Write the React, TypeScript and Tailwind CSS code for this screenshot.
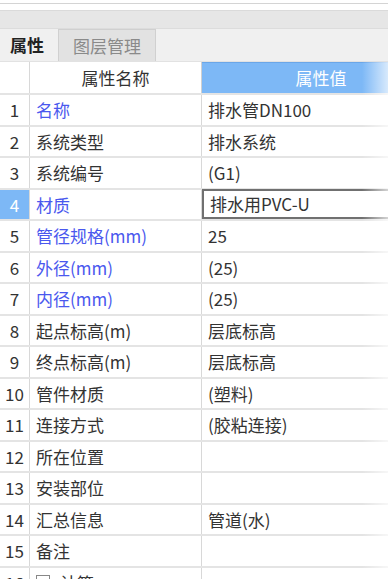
import React from "react";

const rows: { n: number; name: string; value: string; blue?: boolean }[] = [
  { n: 1, name: "名称", value: "排水管DN100", blue: true },
  { n: 2, name: "系统类型", value: "排水系统" },
  { n: 3, name: "系统编号", value: "(G1)" },
  { n: 4, name: "材质", value: "排水用PVC-U", blue: true },
  { n: 5, name: "管径规格(mm)", value: "25", blue: true },
  { n: 6, name: "外径(mm)", value: "(25)", blue: true },
  { n: 7, name: "内径(mm)", value: "(25)", blue: true },
  { n: 8, name: "起点标高(m)", value: "层底标高" },
  { n: 9, name: "终点标高(m)", value: "层底标高" },
  { n: 10, name: "管件材质", value: "(塑料)" },
  { n: 11, name: "连接方式", value: "(胶粘连接)" },
  { n: 12, name: "所在位置", value: "" },
  { n: 13, name: "安装部位", value: "" },
  { n: 14, name: "汇总信息", value: "管道(水)" },
  { n: 15, name: "备注", value: "" },
];

export default function App() {
  const font = { fontFamily: '"Noto Sans CJK SC", "Noto Sans", sans-serif' };
  return (
    <div className="w-[388px] h-[579px] overflow-hidden bg-white relative text-[#333]" style={font}>
      {/* top chrome */}
      <div className="h-[3px] bg-white" />
      <div className="h-[1px] bg-[#d4d4d4]" />
      <div className="h-[6px] bg-white" />
      <div className="h-[18px] bg-[#e6e6e6] border-t border-[#dadada]" />
      {/* tabs */}
      <div className="h-[34px] bg-[#f0f0f0] border-t border-[#dcdcdc] flex items-stretch border-b border-b-[#e2e2e2]">
        <div className="w-[58px] flex items-center pl-[10px] text-[17px] font-bold text-[#222]">属性</div>
        <div className="w-[98px] flex items-center justify-center bg-[#e2e2e2] border-x border-t border-[#d0d0d0] text-[17px] text-[#8a8a8a]">
          图层管理
        </div>
      </div>
      {/* table */}
      <div className="w-[440px]">
        <div className="grid grid-cols-[30px_172px_238px] h-[31px] text-[17px]">
          <div className="border-r border-[#d8d8d8] bg-white" />
          <div className="border-r border-[#d0d0d0] bg-white flex items-center justify-center">属性名称</div>
          <div className="bg-[#7db8f6] flex items-center justify-center text-white border-t border-[#6aa6e8]">属性值</div>
        </div>
        {rows.map((r) => (
          <div
            key={r.n}
            className="grid grid-cols-[30px_172px_238px] h-[31.5px] text-[17px] border-t-2 border-[#e4e4e4]"
          >
            <div
              className={
                "flex items-center justify-center border-r border-[#d8d8d8] " +
                (r.n === 4 ? "bg-[#7db8f6] text-white" : "")
              }
            >
              {r.n}
            </div>
            <div
              className={
                "flex items-center pl-[6px] border-r border-[#d8d8d8] " +
                (r.blue ? "text-[#4a58ee]" : "text-[#333]")
              }
            >
              {r.name}
            </div>
            <div
              className={
                "flex items-center pl-[6px] " +
                (r.n === 4 ? "border-2 border-[#707070] -mt-[1px]" : "")
              }
            >
              {r.value}
            </div>
          </div>
        ))}
        <div className="grid grid-cols-[30px_172px_238px] h-[31.5px] text-[17px] border-t-2 border-[#e4e4e4]">
          <div className="flex items-center justify-center border-r border-[#d8d8d8]">16</div>
          <div className="flex items-center pl-[6px] gap-[10px] border-r border-[#d8d8d8]">
            <span className="w-[14px] h-[14px] border border-[#888] flex items-center justify-center text-[12px] leading-none">+</span>
            <span>计算</span>
          </div>
          <div />
        </div>
      </div>
      <div className="absolute top-[62px] right-0 w-[26px] h-[517px] bg-gradient-to-r from-transparent to-white/70 pointer-events-none" />
    </div>
  );
}
